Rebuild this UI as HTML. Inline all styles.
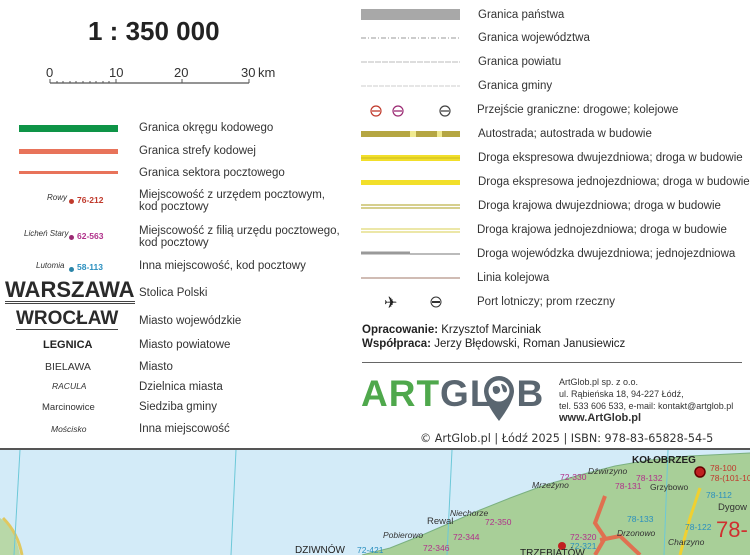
<!DOCTYPE html>
<html><head><meta charset="utf-8"><style>
*{margin:0;padding:0}
body{width:750px;height:555px;background:#fff;position:relative;overflow:hidden;font-family:"Liberation Sans",sans-serif;color:#333}
.a{position:absolute;white-space:nowrap}
.t{font-size:11.5px;color:#333}
.ln{position:absolute}
</style></head><body>
<div class="a" style="left:88px;top:16px;font-size:26px;font-weight:bold;color:#222">1 : 350 000</div>
<svg class="a" style="left:40px;top:62px" width="250" height="25">
<g font-family="Liberation Sans" font-size="13" fill="#333"><text x="6" y="15">0</text><text x="69" y="15">10</text><text x="134" y="15">20</text><text x="201" y="15">30</text><text x="218" y="15">km</text></g>
<line x1="10" y1="21" x2="209" y2="21" stroke="#555" stroke-width="1.2"/>
<g stroke="#555"><line x1="10" y1="17" x2="10" y2="21"/><line x1="76" y1="17" x2="76" y2="21"/><line x1="142" y1="17" x2="142" y2="21"/><line x1="209" y1="17" x2="209" y2="21"/>
<line x1="17" y1="19" x2="17" y2="21"/><line x1="23" y1="19" x2="23" y2="21"/><line x1="30" y1="19" x2="30" y2="21"/><line x1="36" y1="19" x2="36" y2="21"/><line x1="43" y1="19" x2="43" y2="21"/><line x1="50" y1="19" x2="50" y2="21"/><line x1="56" y1="19" x2="56" y2="21"/><line x1="63" y1="19" x2="63" y2="21"/><line x1="69" y1="19" x2="69" y2="21"/></g></svg>
<div class="ln" style="left:19px;top:125px;width:99px;height:7px;background:#0e9447"></div>
<div class="ln" style="left:19px;top:149px;width:99px;height:5px;background:#e8735a"></div>
<div class="ln" style="left:19px;top:171px;width:99px;height:3px;background:#e8735a"></div>
<div class="a t" style="left:139px;top:122px">Granica okręgu kodowego</div>
<div class="a t" style="left:139px;top:145px">Granica strefy kodowej</div>
<div class="a t" style="left:139px;top:167px">Granica sektora pocztowego</div>
<div class="a" style="left:47px;top:193px;font-size:8px;font-style:italic">Rowy</div><div class="a" style="left:69px;top:199px;width:5px;height:5px;border-radius:50%;background:#c0392b"></div><div class="a" style="left:77px;top:195px;font-size:8.5px;color:#c0392b;font-weight:bold">76-212</div>
<div class="a t" style="left:139px;top:189px;line-height:12px">Miejscowość z urzędem pocztowym,<br>kod pocztowy</div>
<div class="a" style="left:24px;top:229px;font-size:8px;font-style:italic">Licheń Stary</div><div class="a" style="left:69px;top:235px;width:5px;height:5px;border-radius:50%;background:#9b2a73"></div><div class="a" style="left:77px;top:231px;font-size:8.5px;color:#b0308a;font-weight:bold">62-563</div>
<div class="a t" style="left:139px;top:225px;line-height:12px">Miejscowość z filią urzędu pocztowego,<br>kod pocztowy</div>
<div class="a" style="left:36px;top:261px;font-size:8px;font-style:italic">Lutomia</div><div class="a" style="left:69px;top:267px;width:5px;height:5px;border-radius:50%;background:#2a84a8"></div><div class="a" style="left:77px;top:262px;font-size:8.5px;color:#2a8fbf;font-weight:bold">58-113</div>
<div class="a t" style="left:139px;top:260px">Inna miejscowość, kod pocztowy</div>
<div class="a" style="left:5px;top:279px;font-size:22px;font-weight:bold;color:#2a2a2a;border-bottom:3px double #444;line-height:22px">WARSZAWA</div>
<div class="a t" style="left:139px;top:287px">Stolica Polski</div>
<div class="a" style="left:16px;top:309px;font-size:19px;font-weight:bold;color:#2a2a2a;border-bottom:1.5px solid #444;line-height:20px">WROCŁAW</div>
<div class="a t" style="left:139px;top:315px">Miasto wojewódzkie</div>
<div class="a" style="left:43px;top:339px;font-size:11px;font-weight:bold;color:#222">LEGNICA</div>
<div class="a t" style="left:139px;top:339px">Miasto powiatowe</div>
<div class="a" style="left:45px;top:361px;font-size:10.5px">BIELAWA</div>
<div class="a t" style="left:139px;top:361px">Miasto</div>
<div class="a" style="left:52px;top:381px;font-size:8.5px;font-style:italic">RACULA</div>
<div class="a t" style="left:139px;top:381px">Dzielnica miasta</div>
<div class="a" style="left:42px;top:402px;font-size:9.5px">Marcinowice</div>
<div class="a t" style="left:139px;top:401px">Siedziba gminy</div>
<div class="a" style="left:51px;top:424px;font-size:8.5px;font-style:italic">Mościsko</div>
<div class="a t" style="left:139px;top:423px">Inna miejscowość</div>

<svg class="a" style="left:360px;top:0" width="100" height="315">
<rect x="1" y="9" width="99" height="11" fill="#a8a8a8"/>
<line x1="1" y1="38" x2="100" y2="38" stroke="#999" stroke-dasharray="5,2,1,2"/>
<line x1="1" y1="62" x2="100" y2="62" stroke="#bbb" stroke-dasharray="6,1"/>
<line x1="1" y1="86" x2="100" y2="86" stroke="#ccc" stroke-dasharray="5,1"/>
<g fill="none" stroke-width="1.2"><circle cx="16" cy="111" r="5" stroke="#c0392b"/><circle cx="38" cy="111" r="5" stroke="#9b2a73"/><circle cx="85" cy="111" r="5" stroke="#444"/></g>
<g stroke-width="1.3"><line x1="12" y1="111" x2="20" y2="111" stroke="#c0392b"/><line x1="34" y1="111" x2="42" y2="111" stroke="#9b2a73"/><line x1="81" y1="111" x2="89" y2="111" stroke="#444"/></g>
<rect x="1" y="131" width="99" height="6" fill="#b5a642"/><rect x="50" y="131" width="6" height="6" fill="#f0ea90"/><rect x="77" y="131" width="5" height="6" fill="#f0ea90"/>
<rect x="1" y="155" width="99" height="6" fill="#f2df2a"/><line x1="1" y1="158" x2="100" y2="158" stroke="#c9b820" stroke-width="1"/>
<rect x="1" y="180" width="99" height="5" fill="#f2df2a"/>
<rect x="1" y="204" width="99" height="5" fill="#d6cf8e"/><line x1="1" y1="206.5" x2="100" y2="206.5" stroke="#fff" stroke-width="1"/>
<rect x="1" y="228" width="99" height="5" fill="#ece7a8"/><line x1="1" y1="230.5" x2="100" y2="230.5" stroke="#fff" stroke-width="1"/>
<line x1="1" y1="253" x2="50" y2="253" stroke="#999" stroke-width="3"/><line x1="50" y1="254" x2="100" y2="254" stroke="#bbb" stroke-width="2"/>
<line x1="1" y1="278" x2="100" y2="278" stroke="#a07a6a" stroke-width="1"/>
<text x="24" y="308" font-size="16" fill="#222">✈</text>
<circle cx="76" cy="302" r="5" fill="none" stroke="#333"/><line x1="72" y1="302" x2="80" y2="302" stroke="#333" stroke-width="2"/>
</svg>
<div class="a t" style="left:478px;top:9px">Granica państwa</div>
<div class="a t" style="left:478px;top:32px">Granica województwa</div>
<div class="a t" style="left:478px;top:56px">Granica powiatu</div>
<div class="a t" style="left:478px;top:80px">Granica gminy</div>
<div class="a t" style="left:477px;top:104px">Przejście graniczne: drogowe; kolejowe</div>
<div class="a t" style="left:478px;top:128px">Autostrada; autostrada w budowie</div>
<div class="a t" style="left:478px;top:152px">Droga ekspresowa dwujezdniowa; droga w budowie</div>
<div class="a t" style="left:478px;top:176px">Droga ekspresowa jednojezdniowa; droga w budowie</div>
<div class="a t" style="left:478px;top:200px">Droga krajowa dwujezdniowa; droga w budowie</div>
<div class="a t" style="left:477px;top:224px">Droga krajowa jednojezdniowa; droga w budowie</div>
<div class="a t" style="left:477px;top:248px">Droga wojewódzka dwujezdniowa; jednojezdniowa</div>
<div class="a t" style="left:477px;top:272px">Linia kolejowa</div>
<div class="a t" style="left:477px;top:296px">Port lotniczy; prom rzeczny</div>

<div class="a" style="left:362px;top:323px;font-size:11.5px;line-height:14px;color:#222"><b>Opracowanie:</b> Krzysztof Marciniak<br><b>Współpraca:</b> Jerzy Błędowski, Roman Janusiewicz</div>
<div class="ln" style="left:362px;top:362px;width:380px;height:1px;background:#666"></div>
<div class="a" style="left:361px;top:374px;font-size:37px;font-weight:bold;letter-spacing:1px;line-height:40px"><span style="color:#4fa84c">ART</span><span style="color:#5a6670">GL</span><span style="display:inline-block;width:23px"></span><span style="color:#5a6670">B</span></div>
<svg class="a" style="left:482px;top:374px" width="34" height="50"><path d="M17 2a15 15 0 0 0-15 15c0 11 15 30 15 30s15-19 15-30A15 15 0 0 0 17 2z" fill="#5a6670"/><circle cx="17" cy="17" r="10.5" fill="#fff"/><path d="M11 13c3-2 6-1 7 2s-2 5-4 5-4-3-3-7zM19 10c3 0 6 3 6 6s-3 3-4 1z" fill="#5a6670"/></svg>
<div class="a" style="left:559px;top:376px;font-size:9px;line-height:12px;color:#333">ArtGlob.pl sp. z o.o.<br>ul. Rąbieńska 18, 94-227 Łódź,<br>tel. 533 606 533, e-mail: kontakt@artglob.pl</div>
<div class="a" style="left:559px;top:412px;font-size:11px;font-weight:bold;color:#333">www.ArtGlob.pl</div>
<div class="a" style="left:420px;top:432px;font-size:11.2px;font-family:'DejaVu Sans',sans-serif;color:#333">© ArtGlob.pl | Łódź 2025 | ISBN: 978-83-65828-54-5</div>

<svg class="a" style="left:0;top:448px" width="750" height="107">
<rect width="750" height="107" fill="#d3ebf8"/>
<rect width="750" height="2" fill="#555"/>
<path d="M0 70 Q15 80 20 107 L0 107z" fill="#b8d8a8"/>
<path d="M3 70 Q18 85 22 107" stroke="#e0c860" stroke-width="3" fill="none"/>
<path d="M362 107 L390 100 L420 88 L450 75 L480 62 L510 50 L545 37 L580 27 L615 18 L650 12 L690 8 L750 5 L750 107z" fill="#a8cf98"/>
<path d="M362 107 L390 100 L420 88 L450 75 L480 62 L510 50 L545 37 L580 27 L615 18 L650 12 L690 8 L750 5" fill="none" stroke="#7ab080" stroke-width="1"/>
<g stroke="#6cc8d8" stroke-width="1"><line x1="20" y1="2" x2="14" y2="107"/><line x1="236" y1="2" x2="231" y2="107"/><line x1="452" y1="2" x2="447" y2="107"/><line x1="668" y1="2" x2="664" y2="107"/></g>
<path d="M605 48 L595 75 L605 90 L595 107 M600 92 L620 88 L640 107" stroke="#e07050" stroke-width="4" fill="none"/>
<path d="M700 40 L690 70 L680 107" stroke="#f0d030" stroke-width="3" fill="none"/>
<circle cx="700" cy="24" r="5" fill="#c02020" stroke="#600" stroke-width="1.5"/>
<circle cx="562" cy="98" r="4" fill="#c02020"/>
<g font-family="Liberation Sans" font-size="8.5">
<text x="632" y="15" font-size="10" font-weight="bold" fill="#222">KOŁOBRZEG</text>
<text x="710" y="23" fill="#c0392b">78-100</text><text x="710" y="33" fill="#c0392b">78-(101-10</text>
<text x="560" y="32" fill="#b0308a">72-330</text><text x="532" y="40" font-style="italic" fill="#333">Mrzeżyno</text>
<text x="588" y="26" font-style="italic" fill="#333">Dźwirzyno</text><text x="636" y="33" fill="#b0308a">78-132</text><text x="615" y="41" fill="#b0308a">78-131</text><text x="650" y="42" fill="#333">Grzybowo</text>
<text x="706" y="50" fill="#2a8fbf">78-112</text><text x="718" y="62" fill="#333" font-size="9.5">Dygow</text>
<text x="627" y="74" fill="#2a8fbf">78-133</text><text x="617" y="88" font-style="italic" fill="#333">Drzonowo</text>
<text x="685" y="82" fill="#2a8fbf">78-122</text><text x="668" y="97" font-style="italic" fill="#333">Charzyno</text>
<text x="716" y="89" font-size="22" fill="#d03030">78-</text>
<text x="450" y="68" font-style="italic" fill="#333">Niechorze</text><text x="485" y="77" fill="#b0308a">72-350</text>
<text x="427" y="76" fill="#333" font-size="9.5">Rewal</text><text x="453" y="92" fill="#b0308a">72-344</text>
<text x="383" y="90" font-style="italic" fill="#333">Pobierowo</text><text x="423" y="103" fill="#b0308a">72-346</text>
<text x="570" y="92" fill="#b0308a">72-320</text><text x="570" y="101" fill="#2a8fbf">72-321</text>
<text x="295" y="105" font-size="10" fill="#222">DZIWNÓW</text><text x="357" y="105" fill="#2a8fbf">72-421</text>
<text x="520" y="108" font-size="10" fill="#222">TRZEBIATÓW</text>
</g></svg>
</body></html>
